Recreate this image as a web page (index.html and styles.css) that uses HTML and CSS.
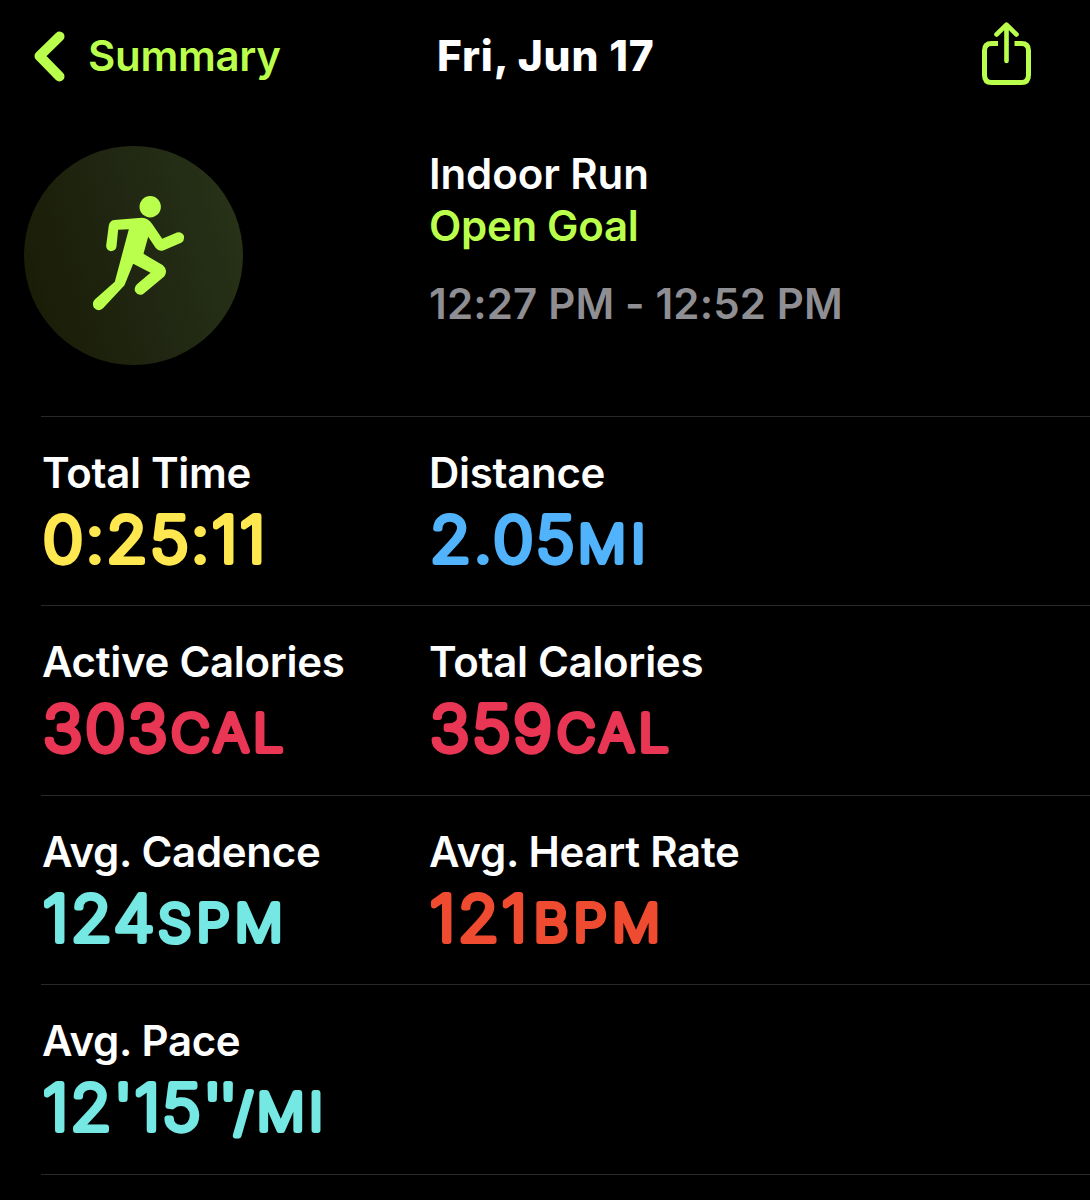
FILE: index.html
```html
<!DOCTYPE html>
<html lang="en">
<head>
<meta charset="utf-8">
<title>Workout Summary</title>
<link rel="stylesheet" href="styles.css">
</head>
<body>
<header class="nav">
  <a class="back">
    <svg class="chevron" viewBox="0 0 34 54"><path d="M26.500 6.500 6.500 26 26.500 46.500"/></svg>
    <span class="back-label">Summary</span>
  </a>
  <h1 class="title">Fri, Jun 17</h1>
  <svg class="share" viewBox="0 0 52 66"><path class="tray" d="M16 21.500H9.500Q2.500 21.500 2.500 28.500V53Q2.500 60.500 9.500 60.500H39.500Q46.500 60.500 46.500 53V28.500Q46.500 21.500 39.500 21.500H32.500"/><path class="arrow" d="M24.500 39V3M14.500 12.500 24.500 2.700 34.500 12.500"/></svg>
</header>

<section class="workout">
  <svg class="badge" viewBox="42 48 656 656">
    <defs><linearGradient id="disc" x1="0" y1="0.65" x2="1" y2="0.35"><stop offset="0" stop-color="#1a1d06"/><stop offset="0.5" stop-color="#202612"/><stop offset="1" stop-color="#273217"/></linearGradient></defs>
    <circle cx="370" cy="376" r="328" fill="url(#disc)"/>
    <g class="runner">
      <circle cx="420" cy="230" r="32"/>
      <path d="M312 270 395 263Q415 264 426 282L456 326 500 307Q514 303 521 317 524 331 513 338L459 361Q445 365 436 353L414 320 400 371 458 405Q475 420 462 439L399 491Q384 499 375 484 370 471 381 461L421 428 369 401 343 465 278 535Q263 546 251 532 245 518 254 508L314 455 356 297 324 299 319 350Q316 363 302 363 289 361 288 347L296 286Q299 272 312 270Z"/>
    </g>
  </svg>
  <div class="details">
    <div class="name">Indoor Run</div>
    <div class="goal">Open Goal</div>
    <div class="time">12:27 PM - 12:52 PM</div>
  </div>
</section>

<main class="stats">
  <div class="row">
    <div class="stat"><div class="label">Total Time</div><svg class="value duration yellow"><text y="57">0:25:11</text></svg></div>
    <div class="stat"><div class="label">Distance</div><svg class="value blue"><text y="57">2.05<tspan class="unit" dx="1">MI</tspan></text></svg></div>
  </div>
  <div class="row">
    <div class="stat"><div class="label">Active Calories</div><svg class="value red"><text y="57">303<tspan class="unit cal" dx="1">CAL</tspan></text></svg></div>
    <div class="stat"><div class="label">Total Calories</div><svg class="value red"><text y="57">359<tspan class="unit cal" dx="2">CAL</tspan></text></svg></div>
  </div>
  <div class="row">
    <div class="stat"><div class="label">Avg. Cadence</div><svg class="value teal"><text y="57">124<tspan class="unit" dx="1">SPM</tspan></text></svg></div>
    <div class="stat"><div class="label">Avg. Heart Rate</div><svg class="value orange"><text y="57">121<tspan class="unit" dx="4">BPM</tspan></text></svg></div>
  </div>
  <div class="row">
    <div class="stat"><div class="label">Avg. Pace</div><svg class="value pace teal"><text y="57">12'15<tspan class="seconds">''</tspan><tspan class="unit cal">/MI</tspan></text></svg></div>
  </div>
</main>
</body>
</html>
```
FILE: styles.css
```css
* { box-sizing: border-box; }
body {
  margin: 0;
  height: 1200px;
  overflow: hidden;
  background: #000;
  color: #fff;
  font-family: Inter, "Liberation Sans", sans-serif;
  font-size: 42px;
  font-weight: 560;
  letter-spacing: -0.3px;
  line-height: 52px;
}
svg { display: block; }
.nav {
  display: grid;
  grid-template-columns: 437px 1fr 52px;
  height: 146px;
  padding: 22px 56px 0 0;
}
.back {
  display: flex;
  gap: 21px;
  padding: 8px 0 0 33px;
  height: 62px;
  color: #b9ff4b;
}
.chevron {
  width: 34px;
  height: 54px;
  fill: none;
  stroke: #b9ff4b;
  stroke-width: 10;
  stroke-linecap: round;
  stroke-linejoin: round;
}
.title {
  margin: 8px 0 0;
  font-size: 42.5px;
  font-weight: 780;
  letter-spacing: 0.8px;
}
.share {
  width: 52px;
  height: 66px;
  fill: none;
  stroke: #b9ff4b;
  stroke-width: 5;
}
.share .arrow {
  stroke-width: 4.6;
  stroke-linecap: round;
  stroke-linejoin: round;
}
.workout {
  display: grid;
  grid-template-columns: 405px 1fr;
  height: 270px;
  padding-left: 24px;
}
.badge { width: 219px; height: 219px; }
.runner { fill: #b9ff4b; }
.details { padding-top: 2px; }
.name { letter-spacing: -0.1px; }
.goal { color: #b9ff4b; }
.time { margin-top: 26px; color: #8e8e93; letter-spacing: 0.15px; }
.stats { margin-left: 41px; }
.row {
  display: grid;
  grid-template-columns: 387px 1fr;
  height: 189.4px;
  padding: 30px 0 0 1px;
  border-top: 1px solid #29292a;
}
.row:last-child {
  height: 190.4px;
  border-bottom: 1px solid #29292a;
}
.value {
  width: 340px;
  height: 76px;
  margin: 6px 0 0 0.6px;
  overflow: visible;
  font-size: 62.5px;
  font-weight: 240;
  letter-spacing: 2.7px;
  stroke-width: 6;
  stroke-linejoin: round;
}
.value text { transform: scaleX(1.06); }
.duration { letter-spacing: 2.5px; }
.pace { letter-spacing: 2.2px; }
.unit { font-size: 50px; letter-spacing: 5.3px; }
.cal { letter-spacing: 4.4px; }
.seconds { letter-spacing: -2.8px; }
.yellow { fill: #ffe750; stroke: #ffe750; }
.blue { fill: #50b3fb; stroke: #50b3fb; }
.red { fill: #ea3655; stroke: #ea3655; }
.teal { fill: #75e8e4; stroke: #75e8e4; }
.orange { fill: #ef4b30; stroke: #ef4b30; }
```
